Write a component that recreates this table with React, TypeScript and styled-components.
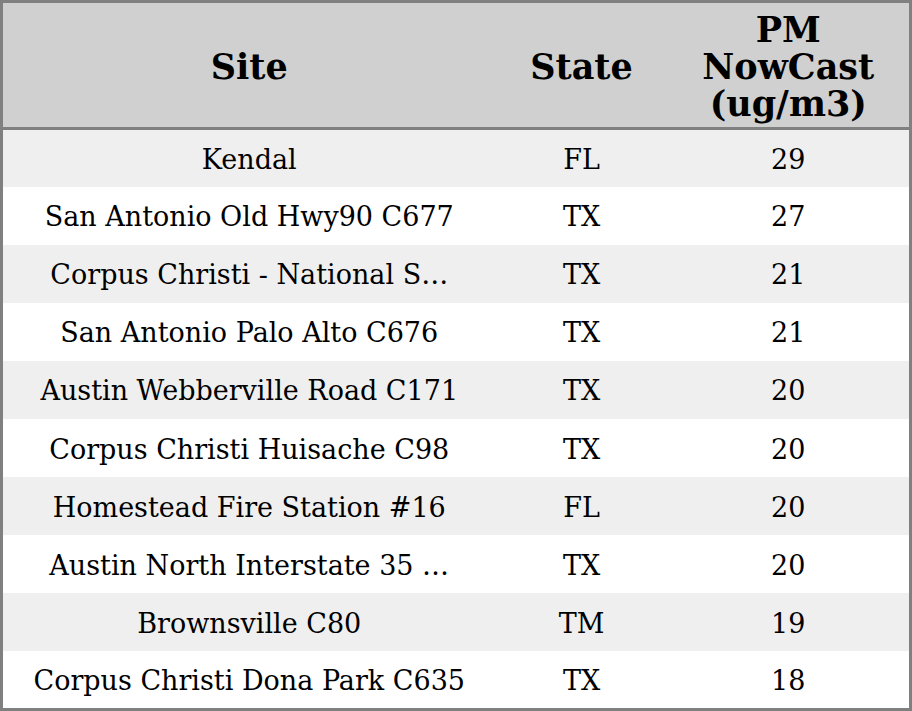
import React from "react";
import styled, { createGlobalStyle } from "styled-components";

const GlobalStyle = createGlobalStyle`
  html, body {
    margin: 0;
    padding: 0;
    background: #ffffff;
  }
  body {
    font-family: "DejaVu Serif", "Liberation Serif", serif;
    color: #000000;
  }
`;

const Table = styled.table`
  width: 912px;
  height: 711px;
  box-sizing: border-box;
  border: 3px solid #808080;
  border-collapse: collapse;
  table-layout: fixed;
  font-family: "DejaVu Serif", "Liberation Serif", serif;
`;

const HeadCell = styled.th`
  box-sizing: border-box;
  height: 127px;
  padding: 2px 4px 0;
  background: #d0d0d0;
  border-bottom: 3px solid #808080;
  font-size: 35px;
  font-weight: bold;
  line-height: 37px;
  text-align: center;
  vertical-align: middle;
`;

const Row = styled.tr<{ $striped: boolean }>`
  background: ${(p) => (p.$striped ? "#efefef" : "#ffffff")};
`;

const Cell = styled.td`
  box-sizing: border-box;
  height: 57.7px;
  padding: 2px 4px 0;
  font-size: 27px;
  text-align: center;
  vertical-align: middle;
  white-space: nowrap;
`;

const rows = [
  { site: "Kendal", state: "FL", value: 29 },
  { site: "San Antonio Old Hwy90 C677", state: "TX", value: 27 },
  { site: "Corpus Christi - National S\u2026", state: "TX", value: 21 },
  { site: "San Antonio Palo Alto C676", state: "TX", value: 21 },
  { site: "Austin Webberville Road C171", state: "TX", value: 20 },
  { site: "Corpus Christi Huisache C98", state: "TX", value: 20 },
  { site: "Homestead Fire Station #16", state: "FL", value: 20 },
  { site: "Austin North Interstate 35 \u2026", state: "TX", value: 20 },
  { site: "Brownsville C80", state: "TM", value: 19 },
  { site: "Corpus Christi Dona Park C635", state: "TX", value: 18 },
];

export default function App() {
  return (
    <>
      <GlobalStyle />
      <Table>
        <colgroup>
          <col style={{ width: 494 }} />
          <col style={{ width: 172 }} />
          <col />
        </colgroup>
        <thead>
          <tr>
            <HeadCell>Site</HeadCell>
            <HeadCell>State</HeadCell>
            <HeadCell>
              PM
              <br />
              NowCast
              <br />
              (ug/m3)
            </HeadCell>
          </tr>
        </thead>
        <tbody>
          {rows.map((r, i) => (
            <Row key={r.site} $striped={i % 2 === 0}>
              <Cell>{r.site}</Cell>
              <Cell>{r.state}</Cell>
              <Cell>{r.value}</Cell>
            </Row>
          ))}
        </tbody>
      </Table>
    </>
  );
}
